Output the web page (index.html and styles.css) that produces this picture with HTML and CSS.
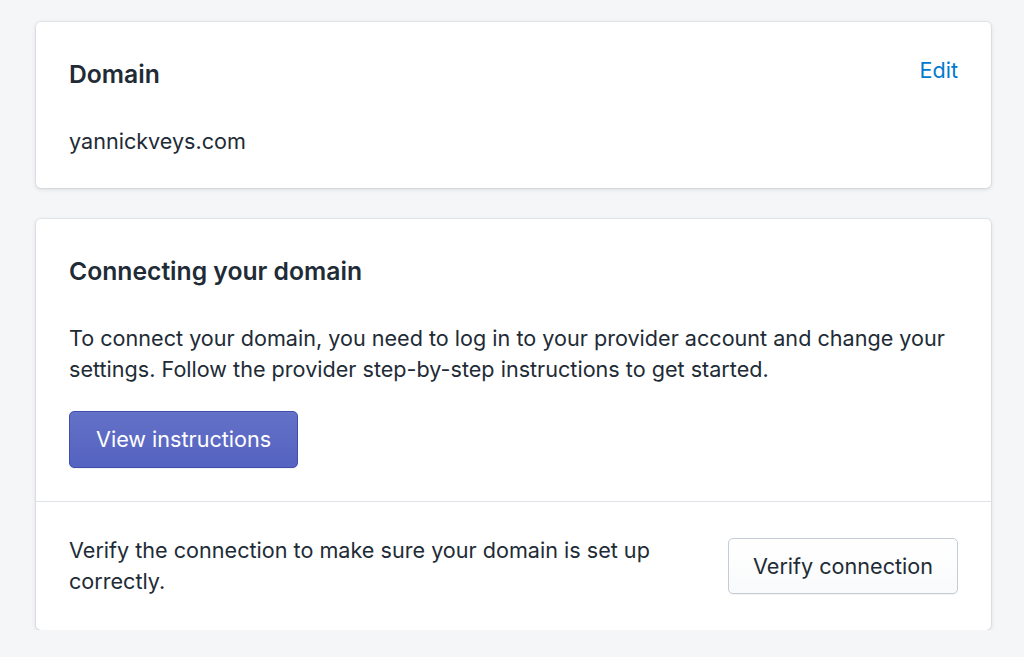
FILE: index.html
```html
<!DOCTYPE html>
<html lang="en">
<head>
<meta charset="utf-8">
<title>Domain</title>
<link rel="stylesheet" href="styles.css">
</head>
<body>
<main class="page">
  <section class="card">
    <div class="card-header">
      <h2 class="card-title">Domain</h2>
      <a class="link" href="#">Edit</a>
    </div>
    <div class="card-body">
      <p class="text">yannickveys.com</p>
    </div>
  </section>

  <section class="card">
    <div class="section">
      <h2 class="card-title">Connecting your domain</h2>
      <p class="text para">To connect your domain, you need to log in to your provider account and change your settings. Follow the provider step-by-step instructions to get started.</p>
      <button class="btn btn-primary" type="button">View instructions</button>
    </div>
    <div class="section section-split">
      <p class="text split-text">Verify the connection to make sure your domain is set up correctly.</p>
      <button class="btn btn-secondary" type="button">Verify connection</button>
    </div>
  </section>
</main>
</body>
</html>
```

FILE: styles.css
```css
* { box-sizing: border-box; }

html, body {
  margin: 0;
  padding: 0;
  background: #f4f6f8;
}

body {
  font-family: Inter, "Noto Sans", "Liberation Sans", sans-serif;
  color: #212b36;
  -webkit-font-smoothing: antialiased;
}

.page {
  display: flex;
  flex-direction: column;
  gap: 31px;
  padding: 22px 33px 0 36px;
}

.card {
  background: #ffffff;
  border-radius: 5px;
  box-shadow: 0 0 0 1px rgba(63, 63, 68, 0.06), 0 1px 4px 0 rgba(63, 63, 68, 0.18);
}

.card-header {
  display: flex;
  justify-content: space-between;
  align-items: flex-start;
  padding: 33px 33px 0 33px;
}

.card-title {
  margin: 0;
  font-size: 24.7px;
  line-height: 38px;
  font-weight: 600;
}

.link {
  color: #007ace;
  text-decoration: none;
  font-size: 21.6px;
  line-height: 30px;
}

.card-body {
  padding: 33px 33px 31px 33px;
}

.text {
  margin: 0;
  font-size: 21.6px;
  line-height: 31px;
}

.section {
  padding: 33px;
}

.section + .section {
  border-top: 1px solid #dfe3e8;
}

.para {
  margin-top: 33px;
}

.btn {
  font-family: inherit;
  font-size: 21.6px;
  line-height: 31px;
  height: 57px;
  padding: 0 26px;
  border-radius: 5px;
  cursor: pointer;
}

.btn-primary {
  margin-top: 26px;
  color: #ffffff;
  background: linear-gradient(to bottom, #6371c7, #5563c1);
  border: 1px solid #3f4eae;
  box-shadow: inset 0 1px 0 0 #6774c8, 0 1px 0 0 rgba(22, 29, 37, 0.05);
  display: block;
}

.section-split {
  display: flex;
  align-items: center;
  gap: 26px;
}

.split-text {
  flex: 1;
}

.btn-secondary {
  flex: none;
  color: #212b36;
  background: linear-gradient(to bottom, #ffffff, #f9fafb);
  border: 1px solid #c4cdd5;
  box-shadow: 0 1px 0 0 rgba(22, 29, 37, 0.05);
  height: 56px;
  padding: 0 24px;
}
```
